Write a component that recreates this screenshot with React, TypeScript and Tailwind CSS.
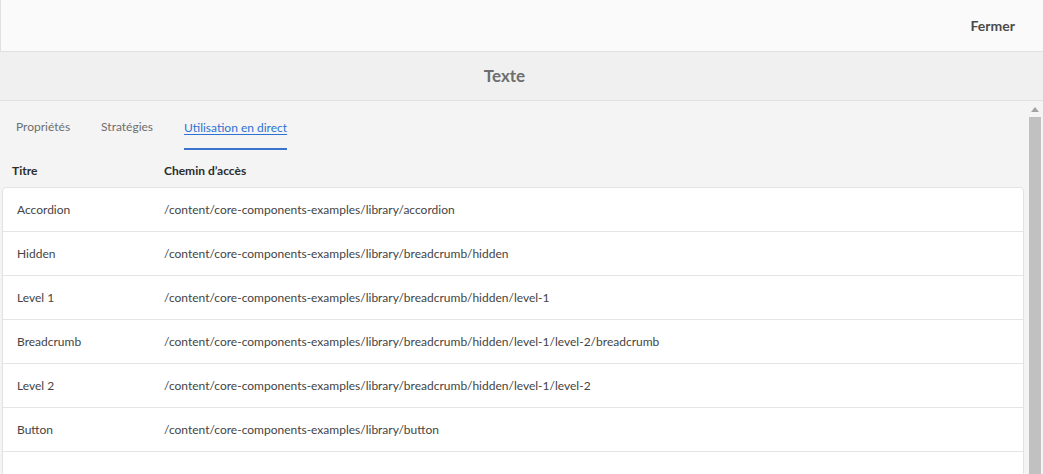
import React from "react";

const rows = [
  ["Accordion", "/content/core-components-examples/library/accordion"],
  ["Hidden", "/content/core-components-examples/library/breadcrumb/hidden"],
  ["Level 1", "/content/core-components-examples/library/breadcrumb/hidden/level-1"],
  ["Breadcrumb", "/content/core-components-examples/library/breadcrumb/hidden/level-1/level-2/breadcrumb"],
  ["Level 2", "/content/core-components-examples/library/breadcrumb/hidden/level-1/level-2"],
  ["Button", "/content/core-components-examples/library/button"],
  ["", ""],
];

export default function App() {
  return (
    <div
      className="w-[1043px] h-[474px] overflow-hidden flex flex-col bg-[#f4f4f4]"
      style={{ fontFamily: 'Lato, "Open Sans", sans-serif' }}
    >
      <div className="h-[52px] shrink-0 bg-[#fafafa] border-b border-[#e1e1e1] border-l flex items-center justify-end pr-[28px]">
        <span className="text-[14px] font-bold text-[#4b4b4b]">Fermer</span>
      </div>
      <div className="h-[49px] shrink-0 bg-[#f0f0f0] border-b border-[#e1e1e1] flex items-center justify-center pr-[34px]">
        <span className="text-[17px] font-bold text-[#6e6e6e]">Texte</span>
      </div>
      <div className="flex-1 flex min-h-0">
        <div className="flex-1 flex flex-col min-w-0 pl-[2px] pr-[2px]">
          <div className="h-[50px] flex items-end gap-[31px] pl-[14px] shrink-0">
            <div className="h-full flex items-center pt-[2px] text-[12px] text-[#6e6e6e]">Propriétés</div>
            <div className="h-full flex items-center pt-[2px] text-[12px] text-[#6e6e6e]">Stratégies</div>
            <div className="h-full flex flex-col justify-between">
              <div className="flex-1 flex items-center pt-[6px] text-[12px] text-[#2d72d2] underline underline-offset-2">Utilisation en direct</div>
              <div className="h-[2px] bg-[#3a74cf] mb-[1px]" />
            </div>
          </div>
          <div className="h-[36px] flex items-center pt-[3px] text-[12px] font-bold text-[#2c2c2c] shrink-0">
            <div className="w-[162px] pl-[10px]">Titre</div>
            <div>Chemin d’accès</div>
          </div>
          <div className="bg-white border border-[#e3e3e3] rounded-t-[4px] flex flex-col">
            {rows.map((r, i) => (
              <div
                key={i}
                className="h-[44px] shrink-0 flex items-center pt-[1px] text-[12px] text-[#444444] border-b border-[#e4e4e4]"
              >
                <div className="w-[161px] pl-[14px]">{r[0]}</div>
                <div>{r[1]}</div>
              </div>
            ))}
          </div>
        </div>
        <div className="w-[17px] shrink-0 bg-[#f4f4f4] flex flex-col items-center">
          <div className="h-[16px] w-full flex items-center justify-center">
            <svg width="8" height="5" viewBox="0 0 8 5">
              <polygon points="0,5 8,5 4,0" fill="#a3a3a3" />
            </svg>
          </div>
          <div className="flex-1 w-[12px] bg-[#c1c1c1]" />
        </div>
      </div>
    </div>
  );
}
